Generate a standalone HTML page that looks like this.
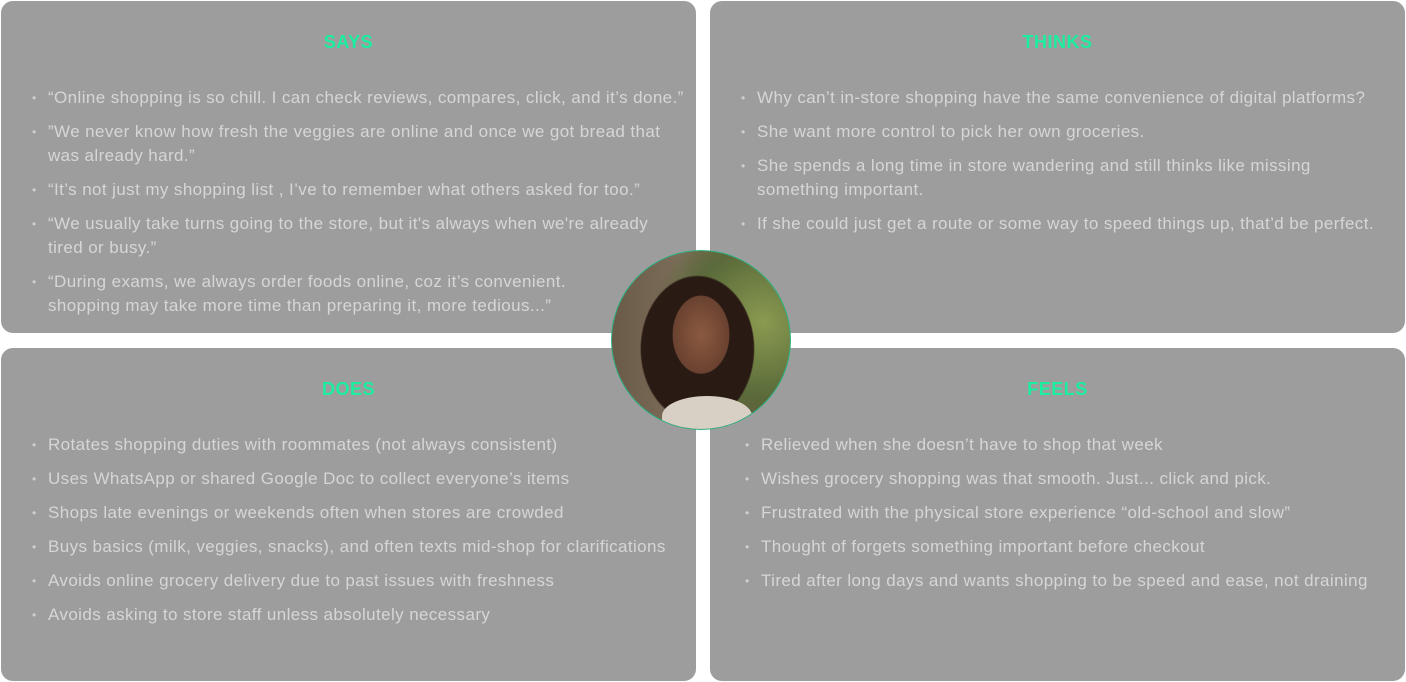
<!DOCTYPE html>
<html><head><style>
html,body{margin:0;padding:0;background:#fff;width:1406px;height:682px;overflow:hidden;position:relative;font-family:"Liberation Sans",sans-serif}
.p{position:absolute;background:#9c9d9c;border-radius:12px;box-sizing:border-box}
.h{position:absolute;left:0;right:0;top:31px;text-align:center;color:#1ceea0;font-weight:bold;font-size:18px;letter-spacing:0.5px}
ul{position:absolute;left:31px;top:85px;margin:0;padding:0;list-style:none;color:#d6d6d6;font-size:17px;letter-spacing:0.4px;line-height:24px}
li{position:relative;padding-left:16px;margin-bottom:10px}
li:before{content:"•";position:absolute;left:0;font-size:12px;color:#cfcfcf}
.c{position:absolute;left:611px;top:250px;width:180px;height:180px;border-radius:50%;border:1px solid #2cb383;box-sizing:border-box;overflow:hidden;
background:radial-gradient(ellipse 40px 55px at 50% 47%,#8a5a40 0,#6a4230 70%,transparent 72%),radial-gradient(ellipse 70px 90px at 48% 55%,#2a1a14 0,#2a1a14 80%,transparent 82%),radial-gradient(circle at 85% 40%,#8a9a50,#5a6a3a 40%,transparent 60%),linear-gradient(90deg,#6a5a48,#7d6e5a 40%,#5a5030)}
.s{position:absolute;left:50px;top:145px;width:90px;height:40px;border-radius:50% 50% 0 0;background:#d8d0c4}
</style></head><body>
<div class="p" style="left:1px;top:1px;width:695px;height:332px"><div class="h">SAYS</div>
<ul style="width:655px">
<li>“Online shopping is so chill. I can check reviews, compares, click, and it’s done.”</li>
<li>”We never know how fresh the veggies are online and once we got bread that was already hard.”</li>
<li>“It’s not just my shopping list , I’ve to remember what others asked for too.”</li>
<li>“We usually take turns going to the store, but it's always when we're already tired or busy.”</li>
<li>“During exams, we always order foods online, coz it’s convenient.<br>shopping may take more time than preparing it, more tedious...”</li>
</ul></div>
<div class="p" style="left:710px;top:1px;width:695px;height:332px"><div class="h">THINKS</div>
<ul style="width:655px">
<li>Why can’t in-store shopping have the same convenience of digital platforms?</li>
<li>She want more control to pick her own groceries.</li>
<li>She spends a long time in store wandering and still thinks like missing something important.</li>
<li>If she could just get a route or some way to speed things up, that’d be perfect.</li>
</ul></div>
<div class="p" style="left:1px;top:348px;width:695px;height:333px"><div class="h">DOES</div>
<ul style="width:662px">
<li>Rotates shopping duties with roommates (not always consistent)</li>
<li>Uses WhatsApp or shared Google Doc to collect everyone’s items</li>
<li>Shops late evenings or weekends often when stores are crowded</li>
<li>Buys basics (milk, veggies, snacks), and often texts mid-shop for clarifications</li>
<li>Avoids online grocery delivery due to past issues with freshness</li>
<li>Avoids asking to store staff unless absolutely necessary</li>
</ul></div>
<div class="p" style="left:710px;top:348px;width:695px;height:333px"><div class="h">FEELS</div>
<ul style="width:662px;left:35px">
<li>Relieved when she doesn’t have to shop that week</li>
<li>Wishes grocery shopping was that smooth. Just... click and pick.</li>
<li>Frustrated with the physical store experience “old-school and slow”</li>
<li>Thought of forgets something important before checkout</li>
<li>Tired after long days and wants shopping to be speed and ease, not draining</li>
</ul></div>
<div class="c"><div class="s"></div></div>
</body></html>
